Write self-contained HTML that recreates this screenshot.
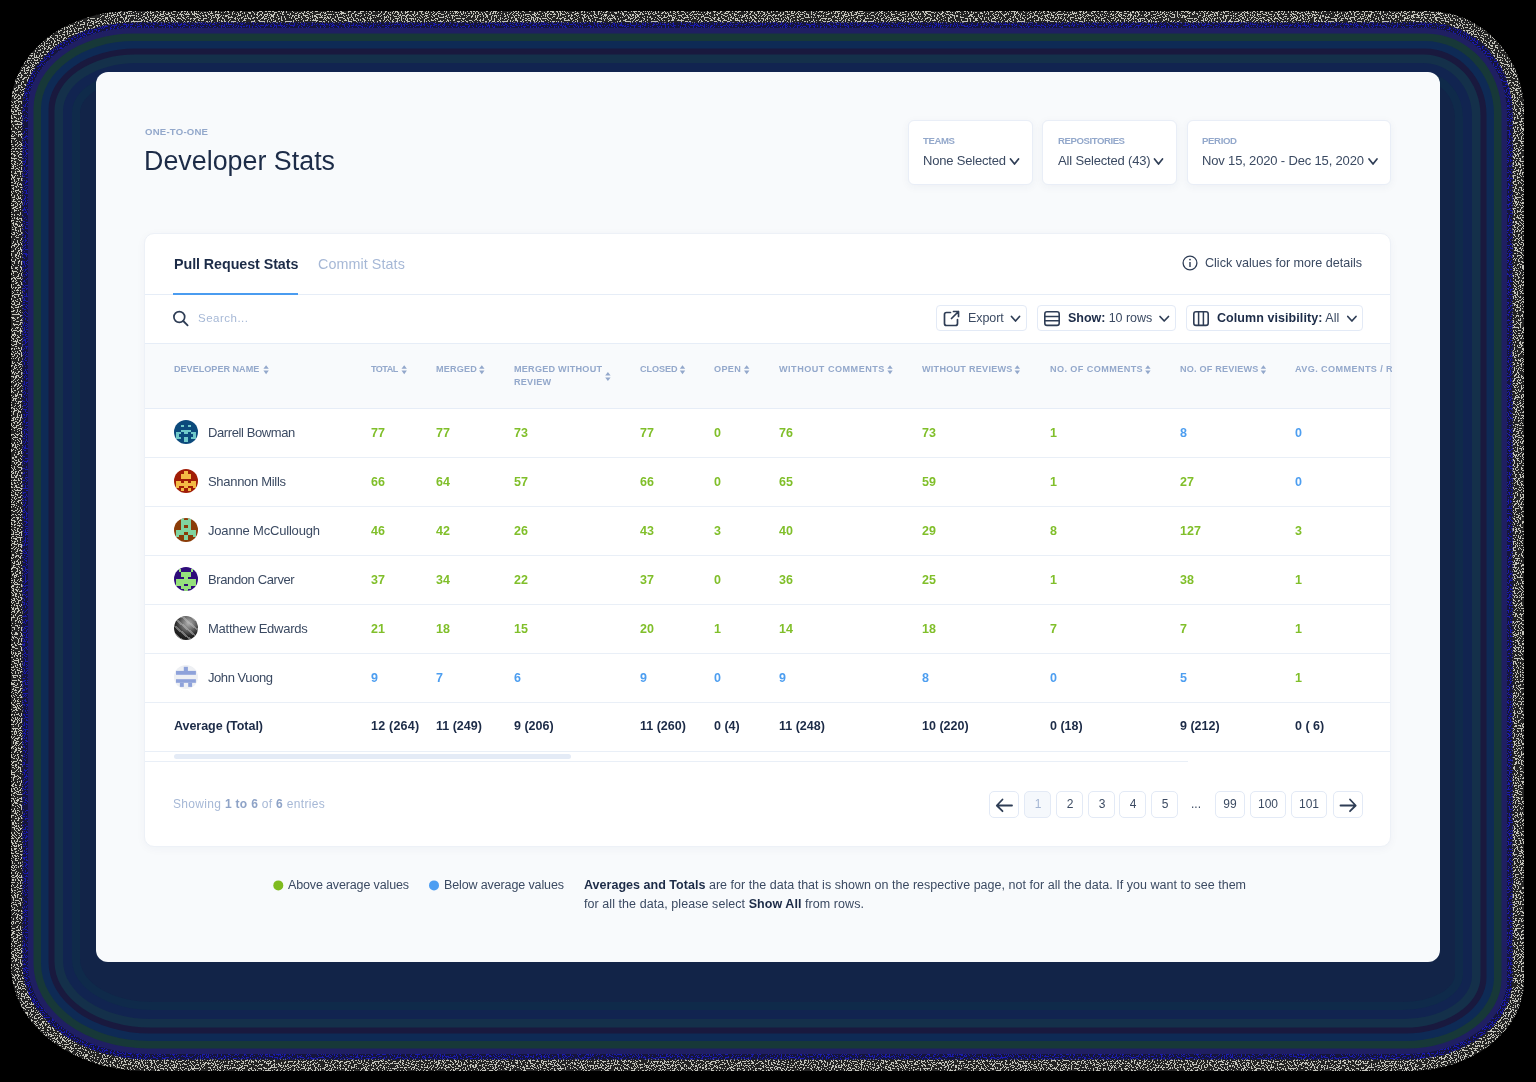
<!DOCTYPE html>
<html><head><meta charset="utf-8">
<style>
*{box-sizing:border-box;margin:0;padding:0}
html,body{width:1536px;height:1082px;overflow:hidden;background:#000;font-family:"Liberation Sans",sans-serif;position:relative;-webkit-font-smoothing:antialiased}
.a{position:absolute}
.t{position:absolute;white-space:nowrap;line-height:1;will-change:transform}
.box{position:absolute;background:#fff;border:1px solid #e9eef7;border-radius:6px;box-shadow:0 2px 8px rgba(30,50,90,0.05)}
.btn{position:absolute;background:#fff;border:1px solid #e3eaf6;border-radius:4px}
.pg{position:absolute;top:791px;height:27px;background:#fff;border:1px solid #e3eaf6;border-radius:5px}
.hl{position:absolute;height:1px;background:#e6edf7}
.av{position:absolute;left:174px;width:24px;height:24px;border-radius:50%;overflow:hidden}
</style></head><body>
<svg class="a" style="left:0;top:0" width="1536" height="1082" viewBox="0 0 1536 1082"><defs><filter id="spk" x="0" y="0" width="1536" height="1082" filterUnits="userSpaceOnUse" color-interpolation-filters="sRGB"><feTurbulence type="fractalNoise" baseFrequency="0.7" numOctaves="1" seed="7" result="n"/><feColorMatrix in="n" type="matrix" values="0 0 0 0 0.76  0 0 0 0 0.76  0 0 0 0 0.73  1 0 0 0 0" result="a"/><feComponentTransfer in="a" result="t"><feFuncA type="discrete" tableValues="0 0 0 0 0 0 0 0 0 0 0 1 1 1 1 1 1 1 1 1"/></feComponentTransfer><feComposite in="t" in2="SourceGraphic" operator="in"/></filter><filter id="spk2" x="0" y="0" width="1536" height="1082" filterUnits="userSpaceOnUse" color-interpolation-filters="sRGB"><feTurbulence type="fractalNoise" baseFrequency="0.75" numOctaves="1" seed="21" result="n"/><feColorMatrix in="n" type="matrix" values="0 0 0 0 0.1  0 0 0 0 0.1  0 0 0 0 0.68  1 0 0 0 0" result="a"/><feComponentTransfer in="a" result="t"><feFuncA type="discrete" tableValues="0 0 0 0 0 0 0 0 0 0 0 1 1 1 1 1 1 1 1 1"/></feComponentTransfer><feComposite in="t" in2="SourceGraphic" operator="in"/></filter></defs><path d="M131.0 11.0H1428.0A96.0 100.0 0 0 1 1524.0 111.0V981.0A115.0 90.0 0 0 1 1409.0 1071.0H146.0A135.0 105.0 0 0 1 11.0 966.0V106.0A120.0 95.0 0 0 1 131.0 11.0Z" fill="#232323"/><path d="M131.0 11.0H1428.0A96.0 100.0 0 0 1 1524.0 111.0V981.0A115.0 90.0 0 0 1 1409.0 1071.0H146.0A135.0 105.0 0 0 1 11.0 966.0V106.0A120.0 95.0 0 0 1 131.0 11.0Z" fill="#000" filter="url(#spk)"/><path d="M132.2 22.5H1426.8A85.7 89.7 0 0 1 1512.5 112.2V979.9A104.7 79.7 0 0 1 1407.8 1059.5H147.2A124.7 94.7 0 0 1 22.5 964.9V107.2A109.7 84.7 0 0 1 132.2 22.5Z" fill="#15153c"/><path d="M132.2 22.5H1426.8A85.7 89.7 0 0 1 1512.5 112.2V979.9A104.7 79.7 0 0 1 1407.8 1059.5H147.2A124.7 94.7 0 0 1 22.5 964.9V107.2A109.7 84.7 0 0 1 132.2 22.5Z" fill="#000" filter="url(#spk2)"/><path d="M132.7 28.0H1426.3A80.7 84.7 0 0 1 1507.0 112.7V979.3A99.7 74.7 0 0 1 1407.3 1054.0H147.7A119.7 89.7 0 0 1 28.0 964.3V107.7A104.7 79.7 0 0 1 132.7 28.0Z" fill="#1f1f62"/><path d="M133.2 33.5H1425.8A75.8 79.8 0 0 1 1501.5 113.2V978.8A94.8 69.8 0 0 1 1406.8 1048.5H148.2A114.8 84.8 0 0 1 33.5 963.8V108.2A99.8 74.8 0 0 1 133.2 33.5Z" fill="#173838"/><path d="M134.0 41.0H1425.0A69.0 73.0 0 0 1 1494.0 114.0V978.0A88.0 63.0 0 0 1 1406.0 1041.0H149.0A108.0 78.0 0 0 1 41.0 963.0V109.0A93.0 68.0 0 0 1 134.0 41.0Z" fill="#0e2a55"/><path d="M134.8 48.5H1424.2A62.2 66.2 0 0 1 1486.5 114.8V977.2A81.2 56.2 0 0 1 1405.2 1033.5H149.8A101.2 71.2 0 0 1 48.5 962.2V109.8A86.2 61.2 0 0 1 134.8 48.5Z" fill="#19193e"/><path d="M135.3 54.5H1423.7A56.9 60.9 0 0 1 1480.5 115.3V976.6A75.8 50.9 0 0 1 1404.7 1027.5H150.3A95.8 65.8 0 0 1 54.5 961.6V110.3A80.8 55.9 0 0 1 135.3 54.5Z" fill="#14304a"/><path d="M136.2 63.0H1422.8A49.2 53.2 0 0 1 1472.0 116.2V975.8A68.2 43.2 0 0 1 1403.8 1019.0H151.2A88.2 58.2 0 0 1 63.0 960.8V111.2A73.2 48.2 0 0 1 136.2 63.0Z" fill="#112450"/><path d="M137.1 72.0H1421.9A41.1 45.1 0 0 1 1463.0 117.1V974.9A60.1 35.1 0 0 1 1402.9 1010.0H152.1A80.1 50.1 0 0 1 72.0 959.9V112.1A65.1 40.1 0 0 1 137.1 72.0Z" fill="#0f2a4a"/><path d="M137.9 80.0H1421.1A33.9 37.9 0 0 1 1455.0 117.9V974.1A52.9 27.9 0 0 1 1402.1 1002.0H152.9A72.9 42.9 0 0 1 80.0 959.1V112.9A57.9 32.9 0 0 1 137.9 80.0Z" fill="#122448"/></svg>
<div class="a" style="left:96px;top:72px;width:1344px;height:890px;background:#f8fafc;border-radius:12px"></div>
<div class="box" style="left:908px;top:120px;width:125px;height:65px"></div>
<div class="box" style="left:1042px;top:120px;width:135px;height:65px"></div>
<div class="box" style="left:1187px;top:120px;width:204px;height:65px"></div>
<div class="a" style="left:144px;top:233px;width:1247px;height:614px;background:#fff;border:1px solid #edf1f7;border-radius:10px;box-shadow:0 2px 10px rgba(30,50,90,0.04)"></div>
<div class="a" style="left:145px;top:294px;width:1245px;height:1px;background:#e6edf7"></div>
<div class="a" style="left:173px;top:293px;width:125px;height:2px;background:#4a9cf0"></div>
<div class="a" style="left:145px;top:343px;width:1245px;height:1px;background:#e6edf7"></div>
<div class="a" style="left:145px;top:344px;width:1245px;height:64px;background:#f8fafc"></div>
<div class="a" style="left:145px;top:408px;width:1245px;height:1px;background:#e6edf7"></div>
<div class="a" style="left:145px;top:457px;width:1245px;height:1px;background:#e9eff7"></div>
<div class="a" style="left:145px;top:506px;width:1245px;height:1px;background:#e9eff7"></div>
<div class="a" style="left:145px;top:555px;width:1245px;height:1px;background:#e9eff7"></div>
<div class="a" style="left:145px;top:604px;width:1245px;height:1px;background:#e9eff7"></div>
<div class="a" style="left:145px;top:653px;width:1245px;height:1px;background:#e9eff7"></div>
<div class="a" style="left:145px;top:702px;width:1245px;height:1px;background:#e9eff7"></div>
<div class="a" style="left:145px;top:751px;width:1245px;height:1px;background:#e9eff7"></div>
<div class="a" style="left:174px;top:754px;width:397px;height:5px;border-radius:3px;background:#e4ebf6"></div>
<div class="a" style="left:145px;top:761px;width:1043px;height:1px;background:#e9eff7"></div>
<svg class="a" style="left:0;top:0;z-index:2" width="1536" height="1082" viewBox="0 0 1536 1082"><path d="M1010.5 159.0L1014.5 164.0L1018.5 159.0" fill="none" stroke="#2e3d55" stroke-width="1.7" stroke-linecap="round" stroke-linejoin="round"/><path d="M1154.5 159.0L1158.5 164.0L1162.5 159.0" fill="none" stroke="#2e3d55" stroke-width="1.7" stroke-linecap="round" stroke-linejoin="round"/><path d="M1369.0 159.0L1373.0 164.0L1377.0 159.0" fill="none" stroke="#2e3d55" stroke-width="1.7" stroke-linecap="round" stroke-linejoin="round"/><path d="M1011.5 316.5L1015.5 321.0L1019.5 316.5" fill="none" stroke="#2e3d55" stroke-width="1.7" stroke-linecap="round" stroke-linejoin="round"/><path d="M1160.0 316.5L1164.2 321.0L1168.5 316.5" fill="none" stroke="#2e3d55" stroke-width="1.7" stroke-linecap="round" stroke-linejoin="round"/><path d="M1347.8 316.5L1351.9 321.0L1356.0 316.5" fill="none" stroke="#2e3d55" stroke-width="1.7" stroke-linecap="round" stroke-linejoin="round"/><circle cx="179.3" cy="317" r="5.4" fill="none" stroke="#2e3d55" stroke-width="1.7"/><path d="M183.3 321L187.6 325.3" stroke="#2e3d55" stroke-width="1.8" stroke-linecap="round"/><circle cx="1190" cy="263" r="6.9" fill="none" stroke="#2e3d55" stroke-width="1.3"/><circle cx="1190" cy="259.6" r="0.9" fill="#2e3d55"/><path d="M1190 262V267" stroke="#2e3d55" stroke-width="1.4"/><path d="M950.5 312.5H946.5Q944.5 312.5 944.5 314.5V323.5Q944.5 325.5 946.5 325.5H955.5Q957.5 325.5 957.5 323.5V319.5" fill="none" stroke="#2e3d55" stroke-width="1.7" stroke-linecap="round"/><path d="M951.5 318.5L958.5 311.5M953.5 311.5H958.5V316.5" fill="none" stroke="#2e3d55" stroke-width="1.7" stroke-linecap="round" stroke-linejoin="round"/><rect x="1044.8" y="311.8" width="14.4" height="13.6" rx="2.2" fill="none" stroke="#2e3d55" stroke-width="1.6"/><path d="M1045 316.5H1059M1045 320.8H1059" stroke="#2e3d55" stroke-width="1.5"/><rect x="1193.8" y="311.8" width="14.4" height="13.6" rx="2.2" fill="none" stroke="#2e3d55" stroke-width="1.6"/><path d="M1198.6 312V325.3M1203.4 312V325.3" stroke="#2e3d55" stroke-width="1.5"/><path d="M263.4 368.8L266.1 365.2L268.8 368.8ZM263.4 370.6L266.1 374.2L268.8 370.6Z" fill="#93a8cb"/><path d="M401.5 368.8L404.2 365.2L406.9 368.8ZM401.5 370.6L404.2 374.2L406.9 370.6Z" fill="#93a8cb"/><path d="M479.1 368.8L481.8 365.2L484.5 368.8ZM479.1 370.6L481.8 374.2L484.5 370.6Z" fill="#93a8cb"/><path d="M679.8 368.8L682.5 365.2L685.2 368.8ZM679.8 370.6L682.5 374.2L685.2 370.6Z" fill="#93a8cb"/><path d="M744.0 368.8L746.7 365.2L749.4 368.8ZM744.0 370.6L746.7 374.2L749.4 370.6Z" fill="#93a8cb"/><path d="M887.3 368.8L890.0 365.2L892.7 368.8ZM887.3 370.6L890.0 374.2L892.7 370.6Z" fill="#93a8cb"/><path d="M1014.6 368.8L1017.3 365.2L1020.0 368.8ZM1014.6 370.6L1017.3 374.2L1020.0 370.6Z" fill="#93a8cb"/><path d="M1145.2 368.8L1147.9 365.2L1150.6 368.8ZM1145.2 370.6L1147.9 374.2L1150.6 370.6Z" fill="#93a8cb"/><path d="M1260.7 368.8L1263.4 365.2L1266.1 368.8ZM1260.7 370.6L1263.4 374.2L1266.1 370.6Z" fill="#93a8cb"/><path d="M605.2 375.6L607.9 372.0L610.6 375.6ZM605.2 377.4L607.9 381.0L610.6 377.4Z" fill="#93a8cb"/><path d="M1012 805.5H997M1002.5 799.5L996.8 805.5L1002.5 811.2" fill="none" stroke="#2e3d55" stroke-width="1.8" stroke-linecap="round" stroke-linejoin="round"/><path d="M1340.5 805.5H1355.5M1350 799.5L1355.7 805.5L1350 811.2" fill="none" stroke="#2e3d55" stroke-width="1.8" stroke-linecap="round" stroke-linejoin="round"/><circle cx="278.3" cy="885.4" r="5" fill="#7fbb1f"/><circle cx="434" cy="885.4" r="5" fill="#4d9ef2"/></svg>
<div class="pg" style="left:989px;width:30px;background:#fff"></div>
<div class="pg" style="left:1024px;width:27px;background:#f5f8fc"></div>
<div class="pg" style="left:1056px;width:27px;background:#fff"></div>
<div class="pg" style="left:1088px;width:27px;background:#fff"></div>
<div class="pg" style="left:1119px;width:27px;background:#fff"></div>
<div class="pg" style="left:1151px;width:27px;background:#fff"></div>
<div class="pg" style="left:1215px;width:30px;background:#fff"></div>
<div class="pg" style="left:1250px;width:36px;background:#fff"></div>
<div class="pg" style="left:1291px;width:36px;background:#fff"></div>
<div class="pg" style="left:1333px;width:30px;background:#fff"></div>
<div class="btn" style="left:936px;top:305px;width:91px;height:26px"></div>
<div class="btn" style="left:1037px;top:305px;width:139px;height:26px"></div>
<div class="btn" style="left:1186px;top:305px;width:177px;height:26px"></div>
<div class="av" style="top:420px"><svg width="24" height="24" viewBox="0 0 10 10" style="display:block" shape-rendering="crispEdges"><rect width="10" height="10" fill="#0c4a7c"/><g fill="#70c9c9"><rect x="3" y="2" width="1" height="1"/><rect x="6" y="2" width="1" height="1"/><rect x="3" y="4" width="1" height="1"/><rect x="4" y="4" width="1" height="1"/><rect x="5" y="4" width="1" height="1"/><rect x="6" y="4" width="1" height="1"/><rect x="1" y="5" width="1" height="1"/><rect x="2" y="5" width="1" height="1"/><rect x="4" y="5" width="1" height="1"/><rect x="5" y="5" width="1" height="1"/><rect x="7" y="5" width="1" height="1"/><rect x="8" y="5" width="1" height="1"/><rect x="1" y="6" width="1" height="1"/><rect x="8" y="6" width="1" height="1"/><rect x="1" y="7" width="1" height="1"/><rect x="2" y="7" width="1" height="1"/><rect x="4" y="7" width="1" height="1"/><rect x="5" y="7" width="1" height="1"/><rect x="7" y="7" width="1" height="1"/><rect x="8" y="7" width="1" height="1"/><rect x="4" y="8" width="1" height="1"/><rect x="5" y="8" width="1" height="1"/></g></svg></div>
<div class="av" style="top:469px"><svg width="24" height="24" viewBox="0 0 10 10" style="display:block" shape-rendering="crispEdges"><rect width="10" height="10" fill="#a11d06"/><g fill="#f3bb45"><rect x="4" y="1" width="1" height="1"/><rect x="5" y="1" width="1" height="1"/><rect x="3" y="2" width="1" height="1"/><rect x="4" y="2" width="1" height="1"/><rect x="5" y="2" width="1" height="1"/><rect x="6" y="2" width="1" height="1"/><rect x="3" y="3" width="1" height="1"/><rect x="4" y="3" width="1" height="1"/><rect x="5" y="3" width="1" height="1"/><rect x="6" y="3" width="1" height="1"/><rect x="1" y="5" width="1" height="1"/><rect x="2" y="5" width="1" height="1"/><rect x="4" y="5" width="1" height="1"/><rect x="5" y="5" width="1" height="1"/><rect x="7" y="5" width="1" height="1"/><rect x="8" y="5" width="1" height="1"/><rect x="1" y="6" width="1" height="1"/><rect x="2" y="6" width="1" height="1"/><rect x="3" y="6" width="1" height="1"/><rect x="4" y="6" width="1" height="1"/><rect x="5" y="6" width="1" height="1"/><rect x="6" y="6" width="1" height="1"/><rect x="7" y="6" width="1" height="1"/><rect x="8" y="6" width="1" height="1"/><rect x="1" y="7" width="1" height="1"/><rect x="4" y="7" width="1" height="1"/><rect x="5" y="7" width="1" height="1"/><rect x="8" y="7" width="1" height="1"/><rect x="3" y="8" width="1" height="1"/><rect x="6" y="8" width="1" height="1"/></g></svg></div>
<div class="av" style="top:518px"><svg width="24" height="24" viewBox="0 0 10 10" style="display:block" shape-rendering="crispEdges"><rect width="10" height="10" fill="#8a3c08"/><g fill="#80d4a0"><rect x="3" y="0" width="1" height="1"/><rect x="6" y="0" width="1" height="1"/><rect x="3" y="1" width="1" height="1"/><rect x="4" y="1" width="1" height="1"/><rect x="5" y="1" width="1" height="1"/><rect x="6" y="1" width="1" height="1"/><rect x="3" y="2" width="1" height="1"/><rect x="4" y="2" width="1" height="1"/><rect x="5" y="2" width="1" height="1"/><rect x="6" y="2" width="1" height="1"/><rect x="3" y="3" width="1" height="1"/><rect x="6" y="3" width="1" height="1"/><rect x="3" y="4" width="1" height="1"/><rect x="4" y="4" width="1" height="1"/><rect x="5" y="4" width="1" height="1"/><rect x="6" y="4" width="1" height="1"/><rect x="1" y="5" width="1" height="1"/><rect x="2" y="5" width="1" height="1"/><rect x="3" y="5" width="1" height="1"/><rect x="4" y="5" width="1" height="1"/><rect x="5" y="5" width="1" height="1"/><rect x="6" y="5" width="1" height="1"/><rect x="7" y="5" width="1" height="1"/><rect x="8" y="5" width="1" height="1"/><rect x="1" y="6" width="1" height="1"/><rect x="2" y="6" width="1" height="1"/><rect x="3" y="6" width="1" height="1"/><rect x="6" y="6" width="1" height="1"/><rect x="7" y="6" width="1" height="1"/><rect x="8" y="6" width="1" height="1"/><rect x="1" y="7" width="1" height="1"/><rect x="4" y="7" width="1" height="1"/><rect x="5" y="7" width="1" height="1"/><rect x="8" y="7" width="1" height="1"/><rect x="4" y="8" width="1" height="1"/><rect x="5" y="8" width="1" height="1"/></g></svg></div>
<div class="av" style="top:567px"><svg width="24" height="24" viewBox="0 0 10 10" style="display:block" shape-rendering="crispEdges"><rect width="10" height="10" fill="#2e0b7a"/><g fill="#95e07c"><rect x="2" y="1" width="1" height="1"/><rect x="7" y="1" width="1" height="1"/><rect x="3" y="2" width="1" height="1"/><rect x="4" y="2" width="1" height="1"/><rect x="5" y="2" width="1" height="1"/><rect x="6" y="2" width="1" height="1"/><rect x="3" y="3" width="1" height="1"/><rect x="4" y="3" width="1" height="1"/><rect x="5" y="3" width="1" height="1"/><rect x="6" y="3" width="1" height="1"/><rect x="4" y="4" width="1" height="1"/><rect x="5" y="4" width="1" height="1"/><rect x="1" y="5" width="1" height="1"/><rect x="2" y="5" width="1" height="1"/><rect x="3" y="5" width="1" height="1"/><rect x="4" y="5" width="1" height="1"/><rect x="5" y="5" width="1" height="1"/><rect x="6" y="5" width="1" height="1"/><rect x="7" y="5" width="1" height="1"/><rect x="8" y="5" width="1" height="1"/><rect x="1" y="6" width="1" height="1"/><rect x="2" y="6" width="1" height="1"/><rect x="3" y="6" width="1" height="1"/><rect x="4" y="6" width="1" height="1"/><rect x="5" y="6" width="1" height="1"/><rect x="6" y="6" width="1" height="1"/><rect x="7" y="6" width="1" height="1"/><rect x="8" y="6" width="1" height="1"/><rect x="1" y="7" width="1" height="1"/><rect x="2" y="7" width="1" height="1"/><rect x="3" y="7" width="1" height="1"/><rect x="6" y="7" width="1" height="1"/><rect x="7" y="7" width="1" height="1"/><rect x="8" y="7" width="1" height="1"/><rect x="3" y="8" width="1" height="1"/><rect x="4" y="8" width="1" height="1"/><rect x="5" y="8" width="1" height="1"/><rect x="6" y="8" width="1" height="1"/><rect x="4" y="9" width="1" height="1"/><rect x="5" y="9" width="1" height="1"/></g></svg></div>
<div class="av" style="top:616px;background:radial-gradient(circle at 60% 30%,#b0b0b0 0,#7a7a7a 25%,#262626 58%,#080808 100%)"><div class="a" style="left:0;top:0;width:24px;height:24px;background:repeating-linear-gradient(40deg,rgba(0,0,0,0) 0,rgba(0,0,0,0) 4px,rgba(190,190,190,.5) 4px,rgba(190,190,190,.5) 6px)"></div></div>
<div class="av" style="top:665px;background:#eef0f4"><svg width="24" height="24" style="display:block"><g fill="#8ea2da"><rect x="9.8" y="1.8" width="4.1" height="4.2"/><rect x="2" y="5.9" width="19.9" height="3.9"/><rect x="2" y="14.2" width="19.9" height="3.6"/><rect x="5.9" y="17.7" width="3.9" height="4.2"/><rect x="14.2" y="17.7" width="3.9" height="4.2"/></g></svg></div>
<div class="t" id="h_one" style="left:144.50px;top:127.47px;font-size:9.60px;font-weight:700;color:#93a8cb;letter-spacing:0.208px;">ONE-TO-ONE</div>
<div class="t" id="h_title" style="left:143.60px;top:147.71px;font-size:26.80px;font-weight:400;color:#1c2b47;letter-spacing:0.025px;">Developer Stats</div>
<div class="t" id="f1l" style="left:923.00px;top:136.07px;font-size:9.60px;font-weight:700;color:#93a8cb;letter-spacing:-0.396px;">TEAMS</div>
<div class="t" id="f1v" style="left:923.00px;top:154.30px;font-size:13.00px;font-weight:400;color:#3b4a62;letter-spacing:-0.190px;">None Selected</div>
<div class="t" id="f2l" style="left:1057.70px;top:136.07px;font-size:9.60px;font-weight:700;color:#93a8cb;letter-spacing:-0.436px;">REPOSITORIES</div>
<div class="t" id="f2v" style="left:1057.50px;top:154.30px;font-size:13.00px;font-weight:400;color:#3b4a62;letter-spacing:-0.168px;">All Selected (43)</div>
<div class="t" id="f3l" style="left:1201.50px;top:136.07px;font-size:9.60px;font-weight:700;color:#93a8cb;letter-spacing:-0.359px;">PERIOD</div>
<div class="t" id="f3v" style="left:1201.50px;top:154.30px;font-size:13.00px;font-weight:400;color:#3b4a62;letter-spacing:-0.163px;">Nov 15, 2020 - Dec 15, 2020</div>
<div class="t" id="tab1" style="left:173.50px;top:256.60px;font-size:14.30px;font-weight:700;color:#1c2b47;letter-spacing:-0.067px;">Pull Request Stats</div>
<div class="t" id="tab2" style="left:318.20px;top:256.60px;font-size:14.30px;font-weight:400;color:#a6b8d6;letter-spacing:0.091px;">Commit Stats</div>
<div class="t" id="info" style="left:1205.20px;top:256.53px;font-size:12.60px;font-weight:400;color:#3b4a62;letter-spacing:-0.017px;">Click values for more details</div>
<div class="t" id="search" style="left:198.30px;top:312.97px;font-size:11.50px;font-weight:400;color:#a6b8d6;letter-spacing:0.496px;">Search...</div>
<div class="t" id="exp" style="left:967.80px;top:311.62px;font-size:12.50px;font-weight:400;color:#3b4a62;letter-spacing:-0.068px;">Export</div>
<div class="t" id="show" style="left:1068.00px;top:311.62px;font-size:12.50px;font-weight:400;color:#3b4a62;letter-spacing:-0.046px;"><b style="font-weight:700;color:#1c2b47">Show:</b> 10 rows</div>
<div class="t" id="colv" style="left:1217.00px;top:311.62px;font-size:12.50px;font-weight:400;color:#3b4a62;letter-spacing:0.068px;"><b style="font-weight:700;color:#1c2b47">Column visibility:</b> All</div>
<div class="t" id="hd0" style="left:174.40px;top:364.90px;font-size:9.10px;font-weight:700;color:#93a8cb;letter-spacing:-0.007px;">DEVELOPER NAME</div>
<div class="t" id="hd1" style="left:370.90px;top:364.90px;font-size:9.10px;font-weight:700;color:#93a8cb;letter-spacing:-0.567px;">TOTAL</div>
<div class="t" id="hd2" style="left:436.00px;top:364.90px;font-size:9.10px;font-weight:700;color:#93a8cb;letter-spacing:0.156px;">MERGED</div>
<div class="t" id="hd3" style="left:514.00px;top:364.90px;font-size:9.10px;font-weight:700;color:#93a8cb;letter-spacing:0.240px;">MERGED WITHOUT</div>
<div class="t" id="hd4" style="left:639.70px;top:364.90px;font-size:9.10px;font-weight:700;color:#93a8cb;letter-spacing:-0.080px;">CLOSED</div>
<div class="t" id="hd5" style="left:714.30px;top:364.90px;font-size:9.10px;font-weight:700;color:#93a8cb;letter-spacing:0.309px;">OPEN</div>
<div class="t" id="hd6" style="left:778.90px;top:364.90px;font-size:9.10px;font-weight:700;color:#93a8cb;letter-spacing:0.493px;">WITHOUT COMMENTS</div>
<div class="t" id="hd7" style="left:921.60px;top:364.90px;font-size:9.10px;font-weight:700;color:#93a8cb;letter-spacing:0.250px;">WITHOUT REVIEWS</div>
<div class="t" id="hd8" style="left:1049.50px;top:364.90px;font-size:9.10px;font-weight:700;color:#93a8cb;letter-spacing:0.414px;">NO. OF COMMENTS</div>
<div class="t" id="hd9" style="left:1180.00px;top:364.90px;font-size:9.10px;font-weight:700;color:#93a8cb;letter-spacing:0.200px;">NO. OF REVIEWS</div>
<div class="t" id="hd10" style="left:1294.80px;top:364.90px;font-size:9.10px;font-weight:700;color:#93a8cb;letter-spacing:0.400px;width:97px;overflow:hidden">AVG. COMMENTS / REVIEW</div>
<div class="t" id="hd3b" style="left:514.00px;top:378.10px;font-size:9.10px;font-weight:700;color:#93a8cb;letter-spacing:0.240px;">REVIEW</div>
<div class="t" id="nm0" style="left:208.00px;top:425.80px;font-size:13.00px;font-weight:400;color:#3b4a62;letter-spacing:-0.406px;">Darrell Bowman</div>
<div class="t" id="v0_0" style="left:370.90px;top:427.02px;font-size:12.50px;font-weight:700;color:#80bf2a;letter-spacing:0.000px;">77</div>
<div class="t" id="v0_1" style="left:436.00px;top:427.02px;font-size:12.50px;font-weight:700;color:#80bf2a;letter-spacing:0.000px;">77</div>
<div class="t" id="v0_2" style="left:514.00px;top:427.02px;font-size:12.50px;font-weight:700;color:#80bf2a;letter-spacing:0.000px;">73</div>
<div class="t" id="v0_3" style="left:639.70px;top:427.02px;font-size:12.50px;font-weight:700;color:#80bf2a;letter-spacing:0.000px;">77</div>
<div class="t" id="v0_4" style="left:714.30px;top:427.02px;font-size:12.50px;font-weight:700;color:#80bf2a;letter-spacing:0.000px;">0</div>
<div class="t" id="v0_5" style="left:778.90px;top:427.02px;font-size:12.50px;font-weight:700;color:#80bf2a;letter-spacing:0.000px;">76</div>
<div class="t" id="v0_6" style="left:921.60px;top:427.02px;font-size:12.50px;font-weight:700;color:#80bf2a;letter-spacing:0.000px;">73</div>
<div class="t" id="v0_7" style="left:1049.50px;top:427.02px;font-size:12.50px;font-weight:700;color:#80bf2a;letter-spacing:0.000px;">1</div>
<div class="t" id="v0_8" style="left:1180.00px;top:427.02px;font-size:12.50px;font-weight:700;color:#4d9ef0;letter-spacing:0.000px;">8</div>
<div class="t" id="v0_9" style="left:1294.80px;top:427.02px;font-size:12.50px;font-weight:700;color:#4d9ef0;letter-spacing:0.000px;">0</div>
<div class="t" id="nm1" style="left:208.00px;top:474.80px;font-size:13.00px;font-weight:400;color:#3b4a62;letter-spacing:-0.305px;">Shannon Mills</div>
<div class="t" id="v1_0" style="left:370.90px;top:476.02px;font-size:12.50px;font-weight:700;color:#80bf2a;letter-spacing:0.000px;">66</div>
<div class="t" id="v1_1" style="left:436.00px;top:476.02px;font-size:12.50px;font-weight:700;color:#80bf2a;letter-spacing:0.000px;">64</div>
<div class="t" id="v1_2" style="left:514.00px;top:476.02px;font-size:12.50px;font-weight:700;color:#80bf2a;letter-spacing:0.000px;">57</div>
<div class="t" id="v1_3" style="left:639.70px;top:476.02px;font-size:12.50px;font-weight:700;color:#80bf2a;letter-spacing:0.000px;">66</div>
<div class="t" id="v1_4" style="left:714.30px;top:476.02px;font-size:12.50px;font-weight:700;color:#80bf2a;letter-spacing:0.000px;">0</div>
<div class="t" id="v1_5" style="left:778.90px;top:476.02px;font-size:12.50px;font-weight:700;color:#80bf2a;letter-spacing:0.000px;">65</div>
<div class="t" id="v1_6" style="left:921.60px;top:476.02px;font-size:12.50px;font-weight:700;color:#80bf2a;letter-spacing:0.000px;">59</div>
<div class="t" id="v1_7" style="left:1049.50px;top:476.02px;font-size:12.50px;font-weight:700;color:#80bf2a;letter-spacing:0.000px;">1</div>
<div class="t" id="v1_8" style="left:1180.00px;top:476.02px;font-size:12.50px;font-weight:700;color:#80bf2a;letter-spacing:0.000px;">27</div>
<div class="t" id="v1_9" style="left:1294.80px;top:476.02px;font-size:12.50px;font-weight:700;color:#4d9ef0;letter-spacing:0.000px;">0</div>
<div class="t" id="nm2" style="left:208.00px;top:523.80px;font-size:13.00px;font-weight:400;color:#3b4a62;letter-spacing:-0.182px;">Joanne McCullough</div>
<div class="t" id="v2_0" style="left:370.90px;top:525.02px;font-size:12.50px;font-weight:700;color:#80bf2a;letter-spacing:0.000px;">46</div>
<div class="t" id="v2_1" style="left:436.00px;top:525.02px;font-size:12.50px;font-weight:700;color:#80bf2a;letter-spacing:0.000px;">42</div>
<div class="t" id="v2_2" style="left:514.00px;top:525.02px;font-size:12.50px;font-weight:700;color:#80bf2a;letter-spacing:0.000px;">26</div>
<div class="t" id="v2_3" style="left:639.70px;top:525.02px;font-size:12.50px;font-weight:700;color:#80bf2a;letter-spacing:0.000px;">43</div>
<div class="t" id="v2_4" style="left:714.30px;top:525.02px;font-size:12.50px;font-weight:700;color:#80bf2a;letter-spacing:0.000px;">3</div>
<div class="t" id="v2_5" style="left:778.90px;top:525.02px;font-size:12.50px;font-weight:700;color:#80bf2a;letter-spacing:0.000px;">40</div>
<div class="t" id="v2_6" style="left:921.60px;top:525.02px;font-size:12.50px;font-weight:700;color:#80bf2a;letter-spacing:0.000px;">29</div>
<div class="t" id="v2_7" style="left:1049.50px;top:525.02px;font-size:12.50px;font-weight:700;color:#80bf2a;letter-spacing:0.000px;">8</div>
<div class="t" id="v2_8" style="left:1180.00px;top:525.02px;font-size:12.50px;font-weight:700;color:#80bf2a;letter-spacing:0.000px;">127</div>
<div class="t" id="v2_9" style="left:1294.80px;top:525.02px;font-size:12.50px;font-weight:700;color:#80bf2a;letter-spacing:0.000px;">3</div>
<div class="t" id="nm3" style="left:208.00px;top:572.80px;font-size:13.00px;font-weight:400;color:#3b4a62;letter-spacing:-0.390px;">Brandon Carver</div>
<div class="t" id="v3_0" style="left:370.90px;top:574.02px;font-size:12.50px;font-weight:700;color:#80bf2a;letter-spacing:0.000px;">37</div>
<div class="t" id="v3_1" style="left:436.00px;top:574.02px;font-size:12.50px;font-weight:700;color:#80bf2a;letter-spacing:0.000px;">34</div>
<div class="t" id="v3_2" style="left:514.00px;top:574.02px;font-size:12.50px;font-weight:700;color:#80bf2a;letter-spacing:0.000px;">22</div>
<div class="t" id="v3_3" style="left:639.70px;top:574.02px;font-size:12.50px;font-weight:700;color:#80bf2a;letter-spacing:0.000px;">37</div>
<div class="t" id="v3_4" style="left:714.30px;top:574.02px;font-size:12.50px;font-weight:700;color:#80bf2a;letter-spacing:0.000px;">0</div>
<div class="t" id="v3_5" style="left:778.90px;top:574.02px;font-size:12.50px;font-weight:700;color:#80bf2a;letter-spacing:0.000px;">36</div>
<div class="t" id="v3_6" style="left:921.60px;top:574.02px;font-size:12.50px;font-weight:700;color:#80bf2a;letter-spacing:0.000px;">25</div>
<div class="t" id="v3_7" style="left:1049.50px;top:574.02px;font-size:12.50px;font-weight:700;color:#80bf2a;letter-spacing:0.000px;">1</div>
<div class="t" id="v3_8" style="left:1180.00px;top:574.02px;font-size:12.50px;font-weight:700;color:#80bf2a;letter-spacing:0.000px;">38</div>
<div class="t" id="v3_9" style="left:1294.80px;top:574.02px;font-size:12.50px;font-weight:700;color:#80bf2a;letter-spacing:0.000px;">1</div>
<div class="t" id="nm4" style="left:208.00px;top:621.80px;font-size:13.00px;font-weight:400;color:#3b4a62;letter-spacing:-0.259px;">Matthew Edwards</div>
<div class="t" id="v4_0" style="left:370.90px;top:623.02px;font-size:12.50px;font-weight:700;color:#80bf2a;letter-spacing:0.000px;">21</div>
<div class="t" id="v4_1" style="left:436.00px;top:623.02px;font-size:12.50px;font-weight:700;color:#80bf2a;letter-spacing:0.000px;">18</div>
<div class="t" id="v4_2" style="left:514.00px;top:623.02px;font-size:12.50px;font-weight:700;color:#80bf2a;letter-spacing:0.000px;">15</div>
<div class="t" id="v4_3" style="left:639.70px;top:623.02px;font-size:12.50px;font-weight:700;color:#80bf2a;letter-spacing:0.000px;">20</div>
<div class="t" id="v4_4" style="left:714.30px;top:623.02px;font-size:12.50px;font-weight:700;color:#80bf2a;letter-spacing:0.000px;">1</div>
<div class="t" id="v4_5" style="left:778.90px;top:623.02px;font-size:12.50px;font-weight:700;color:#80bf2a;letter-spacing:0.000px;">14</div>
<div class="t" id="v4_6" style="left:921.60px;top:623.02px;font-size:12.50px;font-weight:700;color:#80bf2a;letter-spacing:0.000px;">18</div>
<div class="t" id="v4_7" style="left:1049.50px;top:623.02px;font-size:12.50px;font-weight:700;color:#80bf2a;letter-spacing:0.000px;">7</div>
<div class="t" id="v4_8" style="left:1180.00px;top:623.02px;font-size:12.50px;font-weight:700;color:#80bf2a;letter-spacing:0.000px;">7</div>
<div class="t" id="v4_9" style="left:1294.80px;top:623.02px;font-size:12.50px;font-weight:700;color:#80bf2a;letter-spacing:0.000px;">1</div>
<div class="t" id="nm5" style="left:208.00px;top:670.80px;font-size:13.00px;font-weight:400;color:#3b4a62;letter-spacing:-0.436px;">John Vuong</div>
<div class="t" id="v5_0" style="left:370.90px;top:672.02px;font-size:12.50px;font-weight:700;color:#4d9ef0;letter-spacing:0.000px;">9</div>
<div class="t" id="v5_1" style="left:436.00px;top:672.02px;font-size:12.50px;font-weight:700;color:#4d9ef0;letter-spacing:0.000px;">7</div>
<div class="t" id="v5_2" style="left:514.00px;top:672.02px;font-size:12.50px;font-weight:700;color:#4d9ef0;letter-spacing:0.000px;">6</div>
<div class="t" id="v5_3" style="left:639.70px;top:672.02px;font-size:12.50px;font-weight:700;color:#4d9ef0;letter-spacing:0.000px;">9</div>
<div class="t" id="v5_4" style="left:714.30px;top:672.02px;font-size:12.50px;font-weight:700;color:#4d9ef0;letter-spacing:0.000px;">0</div>
<div class="t" id="v5_5" style="left:778.90px;top:672.02px;font-size:12.50px;font-weight:700;color:#4d9ef0;letter-spacing:0.000px;">9</div>
<div class="t" id="v5_6" style="left:921.60px;top:672.02px;font-size:12.50px;font-weight:700;color:#4d9ef0;letter-spacing:0.000px;">8</div>
<div class="t" id="v5_7" style="left:1049.50px;top:672.02px;font-size:12.50px;font-weight:700;color:#4d9ef0;letter-spacing:0.000px;">0</div>
<div class="t" id="v5_8" style="left:1180.00px;top:672.02px;font-size:12.50px;font-weight:700;color:#4d9ef0;letter-spacing:0.000px;">5</div>
<div class="t" id="v5_9" style="left:1294.80px;top:672.02px;font-size:12.50px;font-weight:700;color:#80bf2a;letter-spacing:0.000px;">1</div>
<div class="t" id="avgl" style="left:174.10px;top:720.02px;font-size:12.50px;font-weight:700;color:#1c2b47;letter-spacing:-0.044px;">Average (Total)</div>
<div class="t" id="avg0" style="left:370.90px;top:720.02px;font-size:12.50px;font-weight:700;color:#1c2b47;letter-spacing:0.220px;">12 (264)</div>
<div class="t" id="avg1" style="left:436.00px;top:720.02px;font-size:12.50px;font-weight:700;color:#1c2b47;letter-spacing:0.000px;">11 (249)</div>
<div class="t" id="avg2" style="left:514.00px;top:720.02px;font-size:12.50px;font-weight:700;color:#1c2b47;letter-spacing:0.000px;">9 (206)</div>
<div class="t" id="avg3" style="left:639.70px;top:720.02px;font-size:12.50px;font-weight:700;color:#1c2b47;letter-spacing:0.000px;">11 (260)</div>
<div class="t" id="avg4" style="left:714.30px;top:720.02px;font-size:12.50px;font-weight:700;color:#1c2b47;letter-spacing:0.000px;">0 (4)</div>
<div class="t" id="avg5" style="left:778.90px;top:720.02px;font-size:12.50px;font-weight:700;color:#1c2b47;letter-spacing:0.000px;">11 (248)</div>
<div class="t" id="avg6" style="left:921.60px;top:720.02px;font-size:12.50px;font-weight:700;color:#1c2b47;letter-spacing:0.000px;">10 (220)</div>
<div class="t" id="avg7" style="left:1049.50px;top:720.02px;font-size:12.50px;font-weight:700;color:#1c2b47;letter-spacing:0.000px;">0 (18)</div>
<div class="t" id="avg8" style="left:1180.00px;top:720.02px;font-size:12.50px;font-weight:700;color:#1c2b47;letter-spacing:0.000px;">9 (212)</div>
<div class="t" id="avg9" style="left:1294.80px;top:720.02px;font-size:12.50px;font-weight:700;color:#1c2b47;letter-spacing:0.000px;">0 ( 6)</div>
<div class="t" id="showing" style="left:173.30px;top:798.14px;font-size:12.00px;font-weight:400;color:#a6b8d6;letter-spacing:0.317px;">Showing <b style="font-weight:700;color:#8ea3c7">1 to 6</b> of <b style="font-weight:700;color:#8ea3c7">6</b> entries</div>
<div class="t" id="pg1" style="left:1037.50px;top:797.64px;font-size:12.00px;font-weight:400;color:#a3b5d3;letter-spacing:0.000px;transform:translateX(-50%)">1</div>
<div class="t" id="pg2" style="left:1069.50px;top:797.64px;font-size:12.00px;font-weight:400;color:#3b4a62;letter-spacing:0.000px;transform:translateX(-50%)">2</div>
<div class="t" id="pg3" style="left:1101.50px;top:797.64px;font-size:12.00px;font-weight:400;color:#3b4a62;letter-spacing:0.000px;transform:translateX(-50%)">3</div>
<div class="t" id="pg4" style="left:1132.50px;top:797.64px;font-size:12.00px;font-weight:400;color:#3b4a62;letter-spacing:0.000px;transform:translateX(-50%)">4</div>
<div class="t" id="pg5" style="left:1164.50px;top:797.64px;font-size:12.00px;font-weight:400;color:#3b4a62;letter-spacing:0.000px;transform:translateX(-50%)">5</div>
<div class="t" id="pg99" style="left:1230.00px;top:797.64px;font-size:12.00px;font-weight:400;color:#3b4a62;letter-spacing:0.000px;transform:translateX(-50%)">99</div>
<div class="t" id="pg100" style="left:1268.00px;top:797.64px;font-size:12.00px;font-weight:400;color:#3b4a62;letter-spacing:0.000px;transform:translateX(-50%)">100</div>
<div class="t" id="pg101" style="left:1309.00px;top:797.64px;font-size:12.00px;font-weight:400;color:#3b4a62;letter-spacing:0.000px;transform:translateX(-50%)">101</div>
<div class="t" id="dots" style="left:1191.00px;top:797.64px;font-size:12.00px;font-weight:400;color:#3b4a62;letter-spacing:-0.002px;">...</div>
<div class="t" id="leg1" style="left:288.30px;top:878.92px;font-size:12.50px;font-weight:400;color:#3b4a62;letter-spacing:-0.142px;">Above average values</div>
<div class="t" id="leg2" style="left:444.20px;top:878.92px;font-size:12.50px;font-weight:400;color:#3b4a62;letter-spacing:-0.121px;">Below average values</div>
<div class="t" id="note1" style="left:584.00px;top:878.92px;font-size:12.50px;font-weight:400;color:#3b4a62;letter-spacing:0.028px;"><b style="font-weight:700;color:#1c2b47">Averages and Totals</b> are for the data that is shown on the respective page, not for all the data. If you want to see them</div>
<div class="t" id="note2" style="left:584.00px;top:897.92px;font-size:12.50px;font-weight:400;color:#3b4a62;letter-spacing:0.065px;">for all the data, please select <b style="font-weight:700;color:#1c2b47">Show All</b> from rows.</div>
</body></html>
